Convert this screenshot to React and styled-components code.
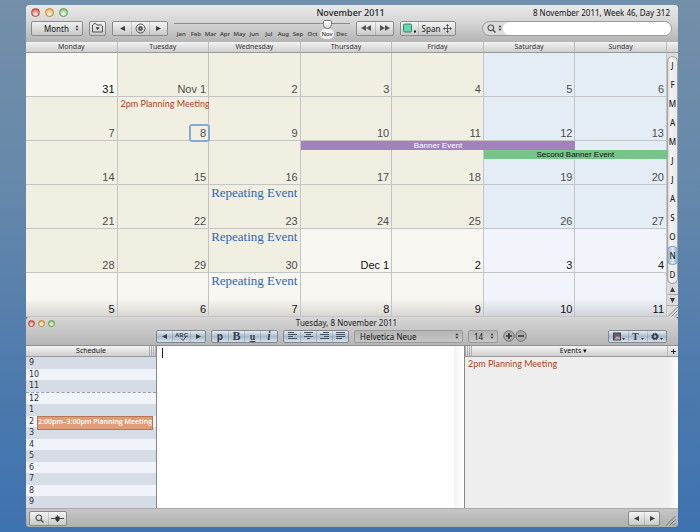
import React from "react";
import styled, { createGlobalStyle, css } from "styled-components";

const GlobalStyle = createGlobalStyle`
  * { box-sizing: border-box; }
  body {
    margin: 0;
    font-family: "Noto Sans", "Open Sans", sans-serif;
    color: #333;
  }
  button, input, select, textarea {
    margin: 0;
    padding: 0;
    border: 0;
    background: none;
    color: inherit;
    font: inherit;
  }
`;

const Desktop = styled.div`
  min-height: 100vh;
  display: flex;
  flex-direction: column;
  padding: 5px 22px 5px 26px;
  background: linear-gradient(#738fa9, #6688aa 35%, #4b79ae 75%, #3e72b0);
`;

const CalendarWindow = styled.section`
  border-radius: 4px 4px 0 0;
  overflow: hidden;
  background: #ececec;
`;

const CalendarBar = styled.header`
  padding: 0 6px 6px 5px;
  background: linear-gradient(#e9e9e9, #d4d4d4 50%, #b4b4b4);
`;

const TitleRow = styled.div`
  display: grid;
  grid-template-columns: 1fr auto 1fr;
  align-items: center;
  height: ${(p) => (p.$small ? 11 : 15)}px;
  padding-right: 2px;
`;

const Lights = styled.div`
  display: flex;
  gap: ${(p) => (p.$small ? 3 : 5)}px;
`;

const Light = styled.button`
  width: ${(p) => (p.$small ? 7 : 9)}px;
  height: ${(p) => (p.$small ? 7 : 9)}px;
  border-radius: 50%;
  border: 1px solid ${(p) => p.$edge};
  background: radial-gradient(circle at 50% 75%, #fff, ${(p) => p.$color} 70%);
`;

const Title = styled.h1`
  margin: 0;
  font-size: ${(p) => (p.$small ? 8 : 9)}px;
  line-height: 12px;
  font-weight: ${(p) => (p.$small ? 400 : 500)};
  color: #222;
`;

const Today = styled.div`
  justify-self: end;
  font-size: 8px;
  line-height: 10px;
  font-weight: 400;
  color: #111;
  white-space: nowrap;
`;

const Controls = styled.div`
  display: flex;
  align-items: center;
  gap: ${(p) => p.$gap}px;
  height: 16px;
`;

const Group = styled.div`
  display: flex;
  flex: none;
  align-items: stretch;
  height: 15px;
  border: 1px solid #8a8a8a;
  border-radius: 2px;
  background: linear-gradient(#f4f4f4, #c9c9c9);
  overflow: hidden;

  ${(p) =>
    p.$blue &&
    css`
      height: 13px;
      border-color: #7f8890;
      background: linear-gradient(#e4edf5, #a9bbcc 50%, #d3e0ec);
    `}
`;

const GroupButton = styled.button`
  display: flex;
  align-items: center;
  justify-content: center;
  gap: 3px;
  width: ${(p) => p.$w}px;
  font-size: 8px;
  line-height: 11px;
  font-weight: 500;
  color: #333;

  & + & {
    border-left: 1px solid #0002;
  }
`;

const Glyph = styled.span`
  font-family: ${(p) => (p.$serif ? '"Liberation Serif", serif' : '"Noto Sans", sans-serif')};
  font-size: ${(p) => p.$size || 10}px;
  line-height: 11px;
  font-weight: 700;
  font-style: ${(p) => (p.$italic ? "italic" : "normal")};
  text-decoration: ${(p) => (p.$underline ? "underline" : "none")};
  color: #38424c;
`;

const SelectBox = styled.label`
  display: flex;
  flex: none;
  align-items: center;
  width: ${(p) => p.$w}px;
  height: ${(p) => (p.$dark ? 13 : 15)}px;
  padding-right: 3px;
  border: 1px solid ${(p) => (p.$dark ? "#999" : "#8a8a8a")};
  border-radius: 2px;
  background: ${(p) =>
    p.$dark ? "linear-gradient(#b4b4b4, #c6c6c6)" : "linear-gradient(#f0f0f0, #c9c9c9)"};
`;

const Select = styled.select`
  appearance: none;
  flex: 1;
  min-width: 0;
  padding-left: ${(p) => p.$pad}px;
  font-size: 8px;
  line-height: 11px;
  font-weight: 400;
  color: #111;
`;

const MonthSlider = styled.div`
  flex: none;
  width: 176px;
  height: 18px;
  background: linear-gradient(#8b8b8b, #8b8b8b) 0 4px / 100% 1px no-repeat;
`;

const Range = styled.input`
  appearance: none;
  display: block;
  position: relative;
  z-index: 1;
  width: 173px;
  height: 10px;

  &::-webkit-slider-thumb {
    appearance: none;
    width: 9px;
    height: 9px;
    border: 1px solid #777;
    border-radius: 2px 2px 5px 5px;
    background: linear-gradient(#fff, #ddd);
  }
`;

const MonthNames = styled.div`
  display: grid;
  grid-template-columns: repeat(12, minmax(0, 1fr));
  padding-right: 1px;
`;

const MonthName = styled.span`
  justify-self: center;
  padding: 0 1px;
  border-radius: 5px;
  font-size: 6px;
  line-height: 10px;
  font-weight: 500;
  color: #333;
  background: ${(p) => (p.$on ? "#f4f4f4" : "none")};
`;

const Search = styled.label`
  display: flex;
  flex: 1;
  align-items: center;
  gap: 2px;
  height: 15px;
  margin-left: 20px;
  padding-left: 4px;
  border: 1px solid #999;
  border-radius: 8px;
  background: #dcdcdc;
`;

const SearchInput = styled.input`
  flex: 1;
  min-width: 0;
  height: 13px;
  margin-left: -1px;
  padding: 0 6px;
  border-radius: 7px;
  background: #fff;
  font-size: 9px;
`;

const CalendarBody = styled.div`
  display: grid;
  grid-template-columns: 1fr 11px;
`;

const MonthTable = styled.table`
  width: 100%;
  table-layout: fixed;
  border-spacing: 0;
`;

const headerFill = css`
  background: linear-gradient(#f3f3f3, #cfcfcf);
  border-bottom: 1px solid #999;
`;

const Weekday = styled.th`
  height: 11px;
  padding: 0;
  ${headerFill}
  border-right: 1px solid #bbb;
  font-size: 7px;
  line-height: 10px;
  font-weight: 400;
  color: #333;
`;

const cellColor = (p) => {
  if (p.$weekend) return p.$outside ? "#f1f4fa" : "#e4ecf6";
  return p.$outside ? "#f8f7f2" : "#f1efe2";
};

const DayCell = styled.td`
  position: relative;
  height: 44px;
  padding: 0;
  border-right: 1px solid #c3c4c3;
  border-bottom: 1px solid #c3c4c3;
  background: ${(p) => (p.$last ? "linear-gradient(#0000 60%, #0002)," : "")} ${cellColor};
`;

const DayContent = styled.div`
  display: flex;
  flex-direction: column;
  justify-content: space-between;
  height: 43px;
`;

const DayNumber = styled.span`
  align-self: flex-end;
  margin-top: auto;
  min-width: 17px;
  padding-right: 2px;
  border-radius: 1px;
  font-family: "Liberation Sans", sans-serif;
  font-size: 11px;
  line-height: 14px;
  text-align: right;
  color: ${(p) => (p.$outside ? "#111" : "#4c4c4c")};
  ${(p) =>
    p.$today &&
    css`
      position: relative;
      z-index: 1;
      outline: 2px solid #83abd8;
    `}
`;

const eventFonts = {
  futura: css`
    padding-left: 3px;
    font: 400 9px/13px Lato, sans-serif;
    color: #b03f1c;
  `,
  century: css`
    padding-left: 2px;
    font: 400 13px/16px "Liberation Serif", serif;
    color: #2d66b5;
  `,
};

const EventText = styled.span`
  white-space: nowrap;
  ${(p) => eventFonts[p.$kind]}
`;

const Banner = styled.div`
  position: absolute;
  z-index: 2;
  top: ${(p) => p.$lane * 9}px;
  left: 0;
  width: calc(${(p) => p.$days} * (100% + 1px));
  background: ${(p) => p.$color};
  color: ${(p) => p.$ink};
  font: 400 8px/9px "Liberation Sans", sans-serif;
  text-align: center;
`;

const Rail = styled.nav`
  display: flex;
  flex-direction: column;
  align-items: stretch;
  background: #dcdcdc;
`;

const RailTop = styled.div`
  height: 11px;
  margin-bottom: 3px;
  ${headerFill}
`;

const RailMonths = styled.div`
  display: flex;
  flex-direction: column;
  border-radius: 6px;
  box-shadow: inset 0 0 0 1px #a5a5a5;
  background: linear-gradient(90deg, #ccc, #f3f3f3 30%, #e6e6e6);
`;

const RailButton = styled.button`
  height: 19px;
  border-radius: 5px;
  font-size: 8px;
  line-height: 10px;
  font-weight: 500;
  text-align: center;
  color: #222;
  ${(p) =>
    p.$on &&
    css`
      background: linear-gradient(90deg, #86a8c8, #d9e8f4, #86a8c8);
      box-shadow: inset 0 0 0 1px #8ba3ba;
    `}
`;

const RailArrow = styled.button`
  display: flex;
  align-items: center;
  justify-content: center;
  height: 11px;
  border-bottom: 1px solid #aaa;
`;

const PlannerWindow = styled.section`
  flex: 1;
  display: flex;
  flex-direction: column;
  border-radius: 4px;
  overflow: hidden;
  background: #b9b9b9;
`;

const PlannerBar = styled.header`
  padding: 0 11px 1px 2px;
  border-bottom: 1px solid #8f8f8f;
  background: linear-gradient(#d6d6d6, #b6b6b6);
`;

const FormatControls = styled(Controls)`
  padding-left: 128px;
`;

const Spacer = styled.div`
  flex: 1;
`;

const RoundButton = styled.button`
  display: flex;
  width: 12px;
  height: 12px;
`;

const RoundPair = styled.div`
  display: flex;
`;

const Panes = styled.div`
  flex: 1;
  display: grid;
  grid-template-columns: 131px 1fr 214px;
`;

const Pane = styled.div`
  display: flex;
  flex-direction: column;
  min-width: 0;
  ${(p) => p.$line === "right" && "border-right: 1px solid #888;"}
  ${(p) => p.$line === "left" && "border-left: 1px solid #888;"}
`;

const PaneHeader = styled.div`
  display: flex;
  flex: none;
  align-items: center;
  justify-content: space-between;
  height: 11px;
  ${headerFill}
`;

const PaneTitle = styled.h2`
  flex: 1;
  margin: 0;
  padding-left: ${(p) => p.$indent || 0}px;
  font-size: 7px;
  line-height: 10px;
  font-weight: 400;
  text-align: center;
  color: #111;
`;

const Hours = styled.ol`
  flex: 1;
  display: flex;
  flex-direction: column;
  margin: 0;
  padding: 0;
  list-style: none;
`;

const Hour = styled.li`
  flex: 1;
  display: flex;
  position: relative;
  padding-left: 3px;
  background: ${(p) => (p.$shade ? "#d5dce5" : "#f0f3fa")};
  border-top: ${(p) => (p.$noon ? "1px dashed #8d9fb8" : "0")};
  font-family: "DejaVu Sans", sans-serif;
  font-size: 8px;
  line-height: 11px;
  color: #333;
`;

const Appointment = styled.div`
  position: absolute;
  z-index: 1;
  top: 0;
  left: 11px;
  right: 3px;
  height: 14px;
  overflow: hidden;
  border: 1px solid #b47655;
  background: #df9c77;
  color: #fff;
  font-family: "Open Sans", sans-serif;
  font-size: 7px;
  line-height: 9px;
  font-weight: 600;
  white-space: nowrap;
`;

const EditorPane = styled.div`
  position: relative;
  display: flex;
  background: linear-gradient(90deg, #f3f3f3, #fff) right / 10px 100% no-repeat #fff;
`;

const Editor = styled.textarea`
  flex: 1;
  min-width: 0;
  padding: 2px 6px;
  resize: none;
  outline: none;
  caret-color: transparent;
  font: 400 9px/12px "Liberation Sans", sans-serif;
`;

const Caret = styled.span`
  position: absolute;
  top: 2px;
  left: 5px;
  width: 1px;
  height: 10px;
  background: #222;
`;

const AddButton = styled.button`
  display: flex;
  align-items: center;
  justify-content: center;
  width: 11px;
  height: 10px;
  border-left: 1px solid #bbb;
`;

const EventList = styled.div`
  flex: 1;
  display: flex;
  flex-direction: column;
  background: linear-gradient(90deg, #eee, #fff) right / 10px 100% no-repeat #eee;
`;

const Footer = styled.footer`
  display: flex;
  align-items: center;
  justify-content: space-between;
  height: 19px;
  padding-left: 3px;
  border-top: 1px solid #aaa;
  background: linear-gradient(#c6c6c6, #b0b0b0);
`;

const FooterEnd = styled.div`
  display: flex;
  align-items: flex-end;
  gap: 5px;
  padding-right: 2px;
`;

function Triangle({ dir = "right", size = 5 }) {
  const paths = {
    right: "M0 0 6 3 0 6Z",
    left: "M6 0 0 3 6 6Z",
    up: "M0 6 3 0 6 6Z",
    down: "M0 0 3 6 6 0Z",
  };
  return (
    <svg width={size} height={size} viewBox="0 0 6 6">
      <path d={paths[dir]} fill="#3c3c3c" />
    </svg>
  );
}

function UpDown() {
  return (
    <svg width="4" height="8" viewBox="0 0 5 9">
      <path d="M.5 3.5 2.5 1l2 2.5ZM.5 5.5 2.5 8l2-2.5Z" fill="#333" />
    </svg>
  );
}

function Skip({ flip }) {
  return (
    <svg width="10" height="6" viewBox="0 0 10 6">
      <path d={flip ? "M5 0v6L0 3ZM10 0v6L5 3Z" : "M0 0v6l5-3ZM5 0v6l5-3Z"} fill="#555" />
    </svg>
  );
}

function FolderIcon() {
  return (
    <svg width="11" height="10" viewBox="0 0 11 10" fill="none">
      <path d="M.5 2 2 .7h2L5 2h4.3l1.2 1v6H.5Z" stroke="#555" />
      <path d="M3.7 4.3h3.8L5.6 7Z" fill="#333" />
    </svg>
  );
}

function TargetIcon() {
  return (
    <svg width="11" height="11" viewBox="0 0 11 11" fill="none" stroke="#555">
      <circle cx="5.5" cy="5.5" r="4.5" />
      <circle cx="5.5" cy="5.5" r="1.5" strokeWidth="1.8" />
    </svg>
  );
}

function SwatchIcon() {
  return (
    <svg width="14" height="10" viewBox="0 0 14 10">
      <rect x=".5" y="1" width="8" height="8" rx="1.2" fill="#65d6ad" stroke="#3b7c67" />
      <rect x="11" y="7.5" width="2" height="2" fill="#222" />
    </svg>
  );
}

function MoveIcon() {
  return (
    <svg width="9" height="9" viewBox="0 0 9 9" fill="#444" stroke="#444">
      <path d="M4.500 1.500v6M1.500 4.500h6" strokeWidth=".8" />
      <path d="M3 2 4.500 0 6 2ZM3 7l1.500 2L6 7ZM2 3 0 4.500 2 6ZM7 3l2 1.500L7 6Z" stroke="none" />
    </svg>
  );
}

function Magnifier() {
  return (
    <svg width="9" height="9" viewBox="0 0 9 9" fill="none" stroke="#555">
      <circle cx="3.800" cy="3.800" r="2.800" strokeWidth="1.200" />
      <path d="m6 6 2.500 2.500" strokeWidth="1.500" />
    </svg>
  );
}

function ZoomKnob() {
  return (
    <svg width="13" height="9" viewBox="0 0 13 9">
      <path d="M0 4.500h13" stroke="#444" />
      <path d="M4.500 2.500h4v3.500L6.500 8l-2-2Z" fill="#333" />
      <path d="M6.500 1v7" stroke="#333" strokeWidth=".8" />
    </svg>
  );
}

function SpellIcon() {
  return (
    <svg width="15" height="11" viewBox="0 0 15 11">
      <text x="1" y="6" fontSize="6" fontWeight="600" fontFamily="Liberation Sans" fill="#38424c">
        ABC
      </text>
      <path d="m7 7.500 2 2 4-5" fill="none" stroke="#38424c" />
    </svg>
  );
}

function AlignIcon({ lines }) {
  return (
    <svg width="9" height="8" viewBox="0 0 9 8" stroke="#47525e">
      {lines.map(([from, to], i) => (
        <path key={i} d={`M${from} ${i * 2 + 0.5}H${to}`} />
      ))}
    </svg>
  );
}

function PictureIcon() {
  return (
    <svg width="12" height="9" viewBox="0 0 12 9">
      <rect x=".5" y="1" width="7" height="7" fill="#6d5d62" stroke="#38424c" />
      <path d="M1 7.500 4 4l1.500 1.500L7 4v3.500Z" fill="#b7a5a2" />
      <path d="M9 6h3l-1.500 2Z" fill="#333" />
    </svg>
  );
}

function TextStyleIcon() {
  return (
    <svg width="12" height="9" viewBox="0 0 12 9">
      <text x="0" y="8" fontSize="10" fontWeight="700" fontFamily="Liberation Serif" fill="#38424c">
        T
      </text>
      <path d="M9 6h3l-1.500 2Z" fill="#333" />
    </svg>
  );
}

function GearIcon() {
  return (
    <svg width="12" height="9" viewBox="0 0 12 9">
      <circle cx="4" cy="4.500" r="2.200" fill="none" stroke="#38424c" strokeWidth="1.800" />
      <circle cx="4" cy="4.500" r="3.400" fill="none" stroke="#38424c" strokeDasharray="1.300 1.370" />
      <path d="M9 6h3l-1.500 2Z" fill="#333" />
    </svg>
  );
}

function RoundIcon({ plus }) {
  return (
    <svg width="12" height="12" viewBox="0 0 12 12">
      <circle cx="6" cy="6" r="5.300" fill="#aaa" stroke="#777" />
      <path d={plus ? "M3 6h6M6 3v6" : "M3 6h6"} stroke="#333" strokeWidth="1.600" />
    </svg>
  );
}

function Grip() {
  return (
    <svg width="11" height="11" viewBox="0 0 11 11" stroke="#777">
      <path d="M1 10.500 10.500 1M4.500 10.500l6-6M8 10.500 10.500 8" strokeWidth=".9" />
    </svg>
  );
}

function PaneGrip() {
  return (
    <svg width="7" height="10" viewBox="0 0 7 10" stroke="#999">
      <path d="M.5 0v10M2.500 0v10M4.500 0v10M6.500 0v10" strokeWidth=".7" />
    </svg>
  );
}

function TrafficLights({ small }) {
  return (
    <Lights $small={small}>
      <Light $small={small} $color="#e8665c" $edge="#b0473f" aria-label="Close" />
      <Light $small={small} $color="#f3b95c" $edge="#bb8638" aria-label="Minimize" />
      <Light $small={small} $color="#92cf7b" $edge="#5e9a4c" aria-label="Zoom" />
    </Lights>
  );
}

const months = ["Jan", "Feb", "Mar", "Apr", "May", "Jun", "Jul", "Aug", "Sep", "Oct", "Nov", "Dec"];
const weekdays = ["Monday", "Tuesday", "Wednesday", "Thursday", "Friday", "Saturday", "Sunday"];
const weeks = [
  ["31", "Nov 1", "2", "3", "4", "5", "6"],
  ["7", "8", "9", "10", "11", "12", "13"],
  ["14", "15", "16", "17", "18", "19", "20"],
  ["21", "22", "23", "24", "25", "26", "27"],
  ["28", "29", "30", "Dec 1", "2", "3", "4"],
  ["5", "6", "7", "8", "9", "10", "11"],
];

// keyed by "week-day"
const events = {
  "1-1": { kind: "futura", text: "2pm Planning Meeting" },
  "3-2": { kind: "century", text: "Repeating Event" },
  "4-2": { kind: "century", text: "Repeating Event" },
  "5-2": { kind: "century", text: "Repeating Event" },
};
const banners = {
  "2-3": { text: "Banner Event", days: 3, lane: 0, color: "#a182bd", ink: "#fff" },
  "2-5": { text: "Second Banner Event", days: 2, lane: 1, color: "#76c588", ink: "#111" },
};

const isOutside = (w, d) => (w === 0 && d === 0) || (w === 4 && d > 2) || w === 5;

const hours = [9, 10, 11, 12, 1, 2, 3, 4, 5, 6, 7, 8, 9];

const alignments = [
  { name: "Left", lines: [[0, 6], [0, 9], [0, 5], [0, 9]] },
  { name: "Center", lines: [[0, 9], [2, 7], [0, 9], [3, 6]] },
  { name: "Right", lines: [[3, 9], [0, 9], [4, 9], [0, 9]] },
  { name: "Justify", lines: [[0, 9], [0, 9], [0, 9], [0, 6]] },
];

function Calendar() {
  return (
    <CalendarWindow>
      <CalendarBar>
        <TitleRow>
          <TrafficLights />
          <Title>November 2011</Title>
          <Today>8 November 2011, Week 46, Day 312</Today>
        </TitleRow>
        <Controls $gap={6}>
          <SelectBox $w={52}>
            <Select $pad={12} aria-label="View">
              <option>Month</option>
            </Select>
            <UpDown />
          </SelectBox>
          <Group>
            <GroupButton $w={15} aria-label="Calendars"><FolderIcon /></GroupButton>
          </Group>
          <Group>
            <GroupButton $w={18} aria-label="Previous"><Triangle dir="left" /></GroupButton>
            <GroupButton $w={18} aria-label="Today"><TargetIcon /></GroupButton>
            <GroupButton $w={18} aria-label="Next"><Triangle /></GroupButton>
          </Group>
          <MonthSlider>
            <Range type="range" min="0" max="11" defaultValue="10" aria-label="Month of year" />
            <MonthNames>
              {months.map((m) => (
                <MonthName key={m} $on={m === "Nov"}>{m}</MonthName>
              ))}
            </MonthNames>
          </MonthSlider>
          <Group>
            <GroupButton $w={18} aria-label="Previous year"><Skip flip /></GroupButton>
            <GroupButton $w={18} aria-label="Next year"><Skip /></GroupButton>
          </Group>
          <Group>
            <GroupButton $w={17} aria-label="Color"><SwatchIcon /></GroupButton>
            <GroupButton $w={37}>Span <MoveIcon /></GroupButton>
          </Group>
          <Search>
            <Magnifier />
            <UpDown />
            <SearchInput type="text" aria-label="Search" />
          </Search>
        </Controls>
      </CalendarBar>
      <CalendarBody>
        <MonthTable>
          <thead>
            <tr>
              {weekdays.map((d) => <Weekday key={d} scope="col">{d}</Weekday>)}
            </tr>
          </thead>
          <tbody>
            {weeks.map((days, w) => (
              <tr key={w}>
                {days.map((day, d) => {
                  const event = events[`${w}-${d}`];
                  const banner = banners[`${w}-${d}`];
                  const outside = isOutside(w, d);
                  return (
                    <DayCell key={d} $weekend={d > 4} $outside={outside} $last={w === 5}>
                      {banner && (
                        <Banner $lane={banner.lane} $days={banner.days} $color={banner.color} $ink={banner.ink}>
                          {banner.text}
                        </Banner>
                      )}
                      <DayContent>
                        {event && <EventText $kind={event.kind}>{event.text}</EventText>}
                        <DayNumber $outside={outside} $today={w === 1 && d === 1}>{day}</DayNumber>
                      </DayContent>
                    </DayCell>
                  );
                })}
              </tr>
            ))}
          </tbody>
        </MonthTable>
        <Rail aria-label="Months">
          <RailTop />
          <RailMonths>
            {months.map((m) => (
              <RailButton key={m} $on={m === "Nov"} aria-label={m}>{m[0]}</RailButton>
            ))}
          </RailMonths>
          <RailArrow aria-label="Scroll up"><Triangle dir="up" /></RailArrow>
          <RailArrow aria-label="Scroll down"><Triangle dir="down" /></RailArrow>
          <Grip />
        </Rail>
      </CalendarBody>
    </CalendarWindow>
  );
}

function Planner() {
  return (
    <PlannerWindow>
      <PlannerBar>
        <TitleRow $small>
          <TrafficLights small />
          <Title as="h2" $small>Tuesday, 8 November 2011</Title>
        </TitleRow>
        <FormatControls $gap={5}>
          <Group $blue>
            <GroupButton $w={15} aria-label="Back"><Triangle dir="left" /></GroupButton>
            <GroupButton $w={18} aria-label="Check spelling"><SpellIcon /></GroupButton>
            <GroupButton $w={15} aria-label="Forward"><Triangle /></GroupButton>
          </Group>
          <Group $blue>
            <GroupButton $w={16}><Glyph>p</Glyph></GroupButton>
            <GroupButton $w={16}><Glyph $serif $size={12}>B</Glyph></GroupButton>
            <GroupButton $w={16}><Glyph $serif $underline>u</Glyph></GroupButton>
            <GroupButton $w={17}><Glyph $serif $italic $size={12}>i</Glyph></GroupButton>
          </Group>
          <Group $blue>
            {alignments.map((a) => (
              <GroupButton key={a.name} $w={16} aria-label={`Align ${a.name}`}>
                <AlignIcon lines={a.lines} />
              </GroupButton>
            ))}
          </Group>
          <SelectBox $dark $w={109}>
            <Select $pad={5} aria-label="Font">
              <option>Helvetica Neue</option>
            </Select>
            <UpDown />
          </SelectBox>
          <SelectBox $dark $w={30}>
            <Select $pad={5} aria-label="Font size">
              <option>14</option>
            </Select>
            <UpDown />
          </SelectBox>
          <RoundPair>
            <RoundButton aria-label="Larger"><RoundIcon plus /></RoundButton>
            <RoundButton aria-label="Smaller"><RoundIcon /></RoundButton>
          </RoundPair>
          <Spacer />
          <Group $blue>
            <GroupButton $w={19} aria-label="Insert picture"><PictureIcon /></GroupButton>
            <GroupButton $w={19} aria-label="Text style"><TextStyleIcon /></GroupButton>
            <GroupButton $w={19} aria-label="Settings"><GearIcon /></GroupButton>
          </Group>
        </FormatControls>
      </PlannerBar>
      <Panes>
        <Pane $line="right">
          <PaneHeader>
            <PaneTitle $indent={7}>Schedule</PaneTitle>
            <PaneGrip />
          </PaneHeader>
          <Hours>
            {hours.map((h, i) => (
              <Hour key={i} $shade={i % 2 === 0} $noon={h === 12}>
                {h}
                {h === 2 && <Appointment>2:00pm–3:00pm Planning Meeting</Appointment>}
              </Hour>
            ))}
          </Hours>
        </Pane>
        <EditorPane>
          <Editor aria-label="Notes" />
          <Caret />
        </EditorPane>
        <Pane $line="left">
          <PaneHeader>
            <PaneGrip />
            <PaneTitle $indent={8}>Events ▾</PaneTitle>
            <AddButton aria-label="Add event">
              <svg width="7" height="7" viewBox="0 0 7 7" stroke="#222">
                <path d="M3.500 1v5M1 3.500h5" />
              </svg>
            </AddButton>
          </PaneHeader>
          <EventList>
            <EventText $kind="futura">2pm Planning Meeting</EventText>
          </EventList>
        </Pane>
      </Panes>
      <Footer>
        <Group>
          <GroupButton $w={18} aria-label="Find"><Magnifier /></GroupButton>
          <GroupButton $w={18} aria-label="Zoom level"><ZoomKnob /></GroupButton>
        </Group>
        <FooterEnd>
          <Group>
            <GroupButton $w={15} aria-label="Previous day"><Triangle dir="left" /></GroupButton>
            <GroupButton $w={15} aria-label="Next day"><Triangle /></GroupButton>
          </Group>
          <Grip />
        </FooterEnd>
      </Footer>
    </PlannerWindow>
  );
}

function App() {
  return (
    <>
      <GlobalStyle />
      <Desktop>
        <Calendar />
        <Planner />
      </Desktop>
    </>
  );
}

export default App;
